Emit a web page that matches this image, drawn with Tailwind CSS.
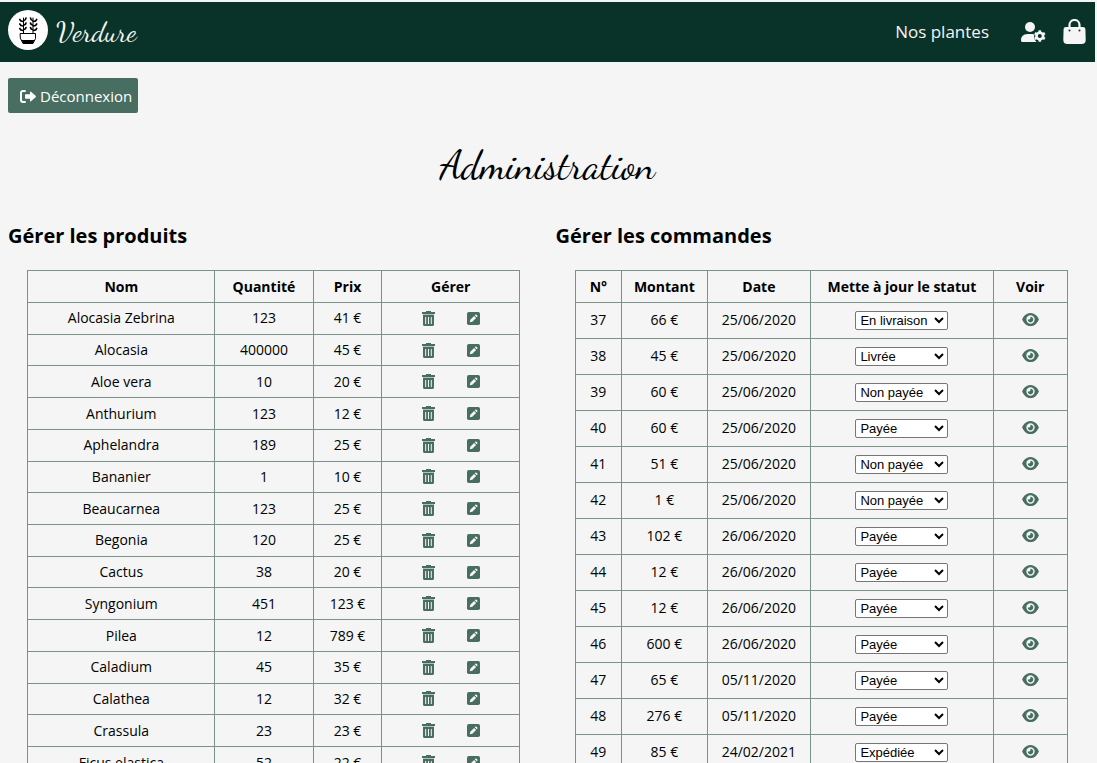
<!DOCTYPE html>
<html lang="fr">
<head>
<meta charset="utf-8">
<meta name="viewport" content="width=device-width, initial-scale=1">
<title>Verdure - Administration</title>
<script src="https://cdn.jsdelivr.net/npm/@tailwindcss/browser@4"></script>
</head>
<body class="h-screen overflow-hidden bg-[#f5f5f5] pt-[2px] pr-[2px] font-['Segoe_UI','Open_Sans',sans-serif] text-black">
<svg class="hidden" aria-hidden="true">
  <symbol id="trash" viewBox="0 0 13 15">
    <path fill="currentColor" fill-rule="evenodd" d="M4 0h5v1h4v2H0V1h4zM1 4h11v9.500q0 1.500-1.500 1.500h-8Q1 15 1 13.500zM3.200 6v7h1V6zM6 6v7h1V6zM8.800 6v7h1V6z"/>
    <path fill="currentColor" opacity=".4" d="M1 3h11v1H1z"/>
  </symbol>
  <symbol id="edit" viewBox="0 0 13 13">
    <rect width="13" height="13" rx="1.800" fill="currentColor"/>
    <path fill="#f5f5f5" d="M2.800 10.200l.5-2.500 3.800-3.800 2 2-3.800 3.800zM7.700 3.300l.6-.6q.6-.5 1.200 0l.8.8q.5.600 0 1.200l-.6.600z"/>
  </symbol>
  <symbol id="eye" viewBox="0 32 576 448">
    <path fill="currentColor" d="M288 32c-80.800 0-145.500 36.800-192.600 80.600C48.600 156 17.300 208 2.500 243.700c-3.300 7.900-3.300 16.700 0 24.600C17.300 304 48.600 356 95.400 399.400C142.500 443.200 207.200 480 288 480s145.500-36.800 192.600-80.600c46.800-43.500 78.100-95.400 93-131.100c3.300-7.900 3.300-16.700 0-24.600c-14.900-35.700-46.200-87.700-93-131.100C433.500 68.800 368.800 32 288 32zM144 256a144 144 0 1 1 288 0 144 144 0 1 1 -288 0zm144-64c0 35.300-28.700 64-64 64c-7.100 0-13.900-1.200-20.300-3.300c-5.500-1.800-11.900 1.600-11.700 7.400c.3 6.900 1.300 13.800 3.200 20.700c13.700 51.200 66.400 81.600 117.600 67.900s81.600-66.400 67.900-117.600c-11.100-41.500-47.800-69.400-88.600-71.100c-5.800-.2-9.200 6.100-7.400 11.700c2.100 6.400 3.300 13.200 3.300 20.300z"/>
  </symbol>
</svg>

<header class="flex h-[60px] items-center justify-between bg-[#093329] pr-[9px] pl-2 text-[#f5f5f5]">
  <a href="#" class="flex items-center gap-2">
    <svg class="mb-1 size-10" viewBox="0 0 40 40" aria-hidden="true">
      <circle cx="20" cy="20" r="20" fill="#fff"/>
      <g fill="none" stroke="#000" stroke-linecap="round">
        <path stroke-width="1" d="M15.500 8v15M25 8v15"/>
        <path stroke-width="1.700" d="M15 11.500q-2.500 0-3.200-2M15 16q-2.500 0-3.200-2M15 20.500q-2.500 0-3.200-2M16 10.500q1.700-.300 2-2.500M16 15q1.700-.300 2-2M16 19.500q1.700-.300 2-2M24.500 10.500q-1.700-.300-2-2.500M24.500 15q-1.700-.300-2-2M24.500 19.500q-1.700-.300-2-2M25.500 11.500q2.500 0 3.200-2M25.500 16q2.500 0 3.200-2M25.500 20.500q2.500 0 3.200-2"/>
        <path stroke-width="1" fill="#fff" d="M12.500 23.500h15v5l-2.500 5H15l-2.500-5z"/>
      </g>
      <path d="M13.500 30h13l-2 4h-9z"/>
    </svg>
    <span class="font-['Dancing_Script',cursive] text-[28px] leading-8">Verdure</span>
  </a>
  <nav class="flex items-center">
    <a href="#" class="mr-8 text-[17px]">Nos plantes</a>
    <a href="#" class="mr-[17px]" aria-label="Mon compte">
      <svg class="h-5 w-[25px]" viewBox="0 0 25 20" fill="currentColor" aria-hidden="true">
        <circle cx="9" cy="5" r="5"/>
        <path d="M6.500 12h5q1.200 0 2 .400-1.500 3.800 2 7.600H1.500Q0 20 0 18.500 0 12 6.500 12z"/>
        <circle cx="18.800" cy="14" r="3.300" fill="none" stroke="currentColor" stroke-width="2.600"/>
        <path fill="none" stroke="currentColor" stroke-width="2.600" d="M18.800 8.200v2.300M18.800 17.500v2.300M13.800 11.100l2 1.200M21.800 15.700l2 1.200M13.800 16.900l2-1.200M21.800 12.300l2-1.200"/>
      </svg>
    </a>
    <a href="#" class="mb-px" aria-label="Panier">
      <svg class="h-[25px] w-[23px]" viewBox="0 0 23 25" aria-hidden="true">
        <path fill="none" stroke="currentColor" stroke-width="2.200" d="M6.500 10V6a5 5 0 0 1 10 0v4"/>
        <path fill="currentColor" d="M3 8h17q2.300 0 2.400 2l.300 11q0 4-4 4H4.300q-4 0-4-4L.600 10q.100-2 2.400-2z"/>
        <circle cx="6.500" cy="11.500" r="1" fill="#093329"/><circle cx="16.500" cy="11.500" r="1" fill="#093329"/>
      </svg>
    </a>
  </nav>
</header>

<main>
  <button class="mt-4 ml-2 flex h-[35px] items-center gap-1 rounded-xs bg-[#486e61] pt-px pr-[6px] pl-3 text-[15px] text-white">
    <svg class="h-[13px] w-4" viewBox="0 0 16 13" fill="none" aria-hidden="true">
      <path stroke="currentColor" stroke-width="2" stroke-linecap="round" d="M5 1H3Q1 1 1 3v7q0 2 2 2h2"/>
      <path fill="currentColor" d="M5 5q0-.700.700-.700H10V2.200q0-1.200 1-.400l4.600 4q.600.700 0 1.400l-4.600 4q-1 .800-1-.400V8.700H5.700Q5 8.700 5 8z"/>
    </svg>
    Déconnexion
  </button>
  <h1 class="mt-7 text-center font-['Dancing_Script',cursive] text-[40px] leading-[48px]">Administration</h1>

  <div class="mt-8 grid grid-cols-2 items-start">
    <section>
      <h2 class="mb-[19px] pl-2 text-xl leading-[30px] font-bold">Gérer les produits</h2>
      <table class="mx-auto h-[509px] w-9/10 table-fixed border-collapse text-center text-sm leading-5 [&_td]:border [&_td]:border-[#7b928a] [&_td]:p-0 [&_th]:border [&_th]:border-[#7b928a]">
        <colgroup><col class="w-[38%]"><col class="w-[20%]"><col class="w-[14%]"><col class="w-[28%]"></colgroup>
        <thead><tr class="h-8"><th>Nom</th><th>Quantité</th><th>Prix</th><th>Gérer</th></tr></thead>
        <tbody id="products"></tbody>
      </table>
    </section>
    <section>
      <h2 class="mb-[19px] pl-2 text-xl leading-[30px] font-bold">Gérer les commandes</h2>
      <table class="mx-auto w-9/10 table-fixed border-collapse text-center text-sm leading-5 [&_td]:border [&_td]:border-[#7b928a] [&_td]:p-0 [&_td:not(:nth-child(4))]:pb-[2px] [&_th]:border [&_th]:border-[#7b928a]">
        <colgroup><col class="w-[46px]"><col class="w-[86px]"><col class="w-[103px]"><col class="w-[183px]"><col></colgroup>
        <thead><tr class="h-8"><th>N°</th><th>Montant</th><th>Date</th><th>Mette à jour le statut</th><th>Voir</th></tr></thead>
        <tbody id="orders"></tbody>
      </table>
    </section>
  </div>
</main>

<script>
const products = [
  ['Alocasia Zebrina', 123, 41], ['Alocasia', 400000, 45], ['Aloe vera', 10, 20],
  ['Anthurium', 123, 12], ['Aphelandra', 189, 25], ['Bananier', 1, 10],
  ['Beaucarnea', 123, 25], ['Begonia', 120, 25], ['Cactus', 38, 20],
  ['Syngonium', 451, 123], ['Pilea', 12, 789], ['Caladium', 45, 35],
  ['Calathea', 12, 32], ['Crassula', 23, 23], ['Ficus elastica', 52, 22]
];
document.getElementById('products').innerHTML = products.map(([name, qty, price]) => `
  <tr><td>${name}</td><td>${qty}</td><td>${price} €</td>
    <td><div class="flex items-center justify-center gap-8 text-[#486e61]">
      <button aria-label="Supprimer ${name}"><svg class="h-[15px] w-[13px]"><use href="#trash"/></svg></button>
      <button aria-label="Modifier ${name}"><svg class="size-[13px]"><use href="#edit"/></svg></button>
    </div></td></tr>`).join('');

const statuses = ['Non payée', 'Payée', 'En livraison', 'Livrée', 'Expédiée'];
const orders = [
  [37, 66, '25/06/2020', 'En livraison'], [38, 45, '25/06/2020', 'Livrée'],
  [39, 60, '25/06/2020', 'Non payée'], [40, 60, '25/06/2020', 'Payée'],
  [41, 51, '25/06/2020', 'Non payée'], [42, 1, '25/06/2020', 'Non payée'],
  [43, 102, '26/06/2020', 'Payée'], [44, 12, '26/06/2020', 'Payée'],
  [45, 12, '26/06/2020', 'Payée'], [46, 600, '26/06/2020', 'Payée'],
  [47, 65, '05/11/2020', 'Payée'], [48, 276, '05/11/2020', 'Payée'],
  [49, 85, '24/02/2021', 'Expédiée']
];
document.getElementById('orders').innerHTML = orders.map(([id, total, date, status]) => `
  <tr class="h-9"><td>${id}</td><td>${total} €</td><td>${date}</td>
    <td><select aria-label="Statut de la commande ${id}" class="mx-auto block h-[19px] w-[93px] rounded-xs border border-[#767676] bg-white p-0 font-['Liberation_Sans',sans-serif] text-[13px] leading-4">
      ${statuses.map(s => `<option${s === status ? ' selected' : ''}>${s}</option>`).join('')}
    </select></td>
    <td><a href="#" class="flex justify-center text-[#486e61]" aria-label="Voir la commande ${id}"><svg class="h-[13px] w-[17px]"><use href="#eye"/></svg></a></td></tr>`).join('');
</script>
</body>
</html>
